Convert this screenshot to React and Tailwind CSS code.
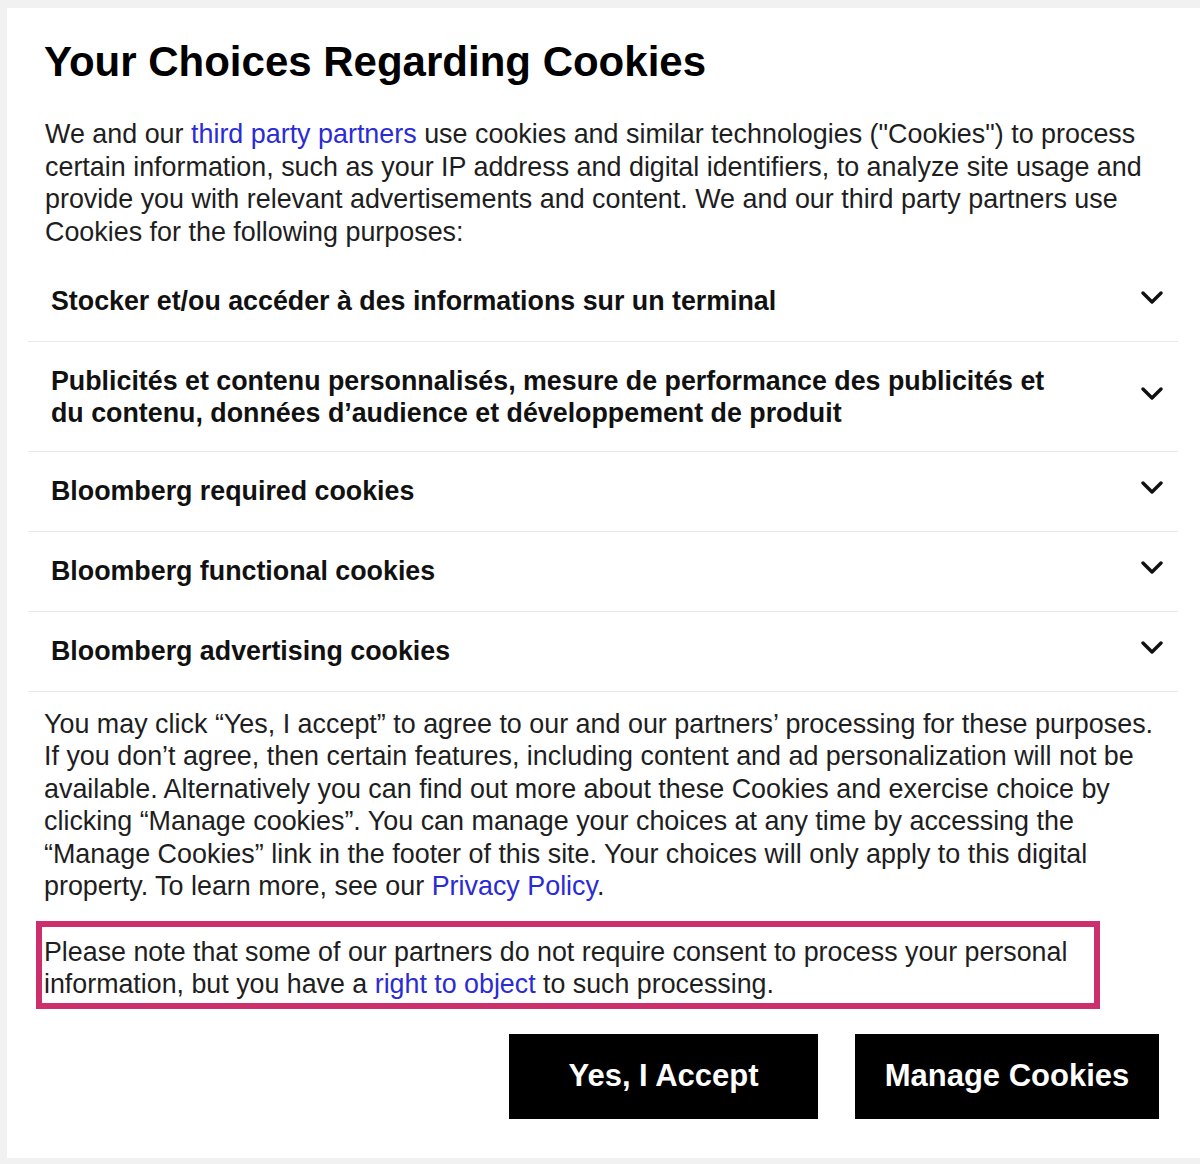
import React from "react";

const PURPOSES = [
  { lines: ["Stocker et/ou accéder à des informations sur un terminal"], pad: "pt-[24px] pb-[23.5px]" },
  {
    lines: [
      "Publicités et contenu personnalisés, mesure de performance des publicités et",
      "du contenu, données d’audience et développement de produit",
    ],
    pad: "pt-[23.5px] pb-[21.5px]",
  },
  { lines: ["Bloomberg required cookies"], pad: "pt-[23.5px] pb-[23.5px]" },
  { lines: ["Bloomberg functional cookies"], pad: "pt-[23.5px] pb-[23.5px]" },
  { lines: ["Bloomberg advertising cookies"], pad: "pt-[23.5px] pb-[23.5px]" },
];

const Chevron = () => (
  <svg width="22" height="14" viewBox="0 0 22 14" fill="none" className="-mt-[6px]">
    <polyline
      points="2,2 11,11 20,2"
      stroke="#111"
      strokeWidth="3.4"
      strokeLinecap="round"
      strokeLinejoin="round"
    />
  </svg>
);

const Link = ({ children }) => <span className="text-[#2b2bd6]">{children}</span>;

const App = () => {
  return (
    <div
      className="w-[1200px] h-[1164px] bg-[#f1f1f1] pt-[8px] pl-[7px]"
      style={{ fontFamily: '"Liberation Sans", Arial, sans-serif' }}
    >
      <div className="w-[1193px] h-[1150px] bg-white pl-[21px] pr-[22px] text-[#1e1e1e]">
        {/* Title */}
        <h1 className="pt-[30px] pl-[16px] text-[42px] leading-[48px] font-bold text-black whitespace-nowrap">
          Your Choices Regarding Cookies
        </h1>

        {/* Intro */}
        <p className="mt-[32px] pl-[17px] text-[26.9px] leading-[32.5px] whitespace-nowrap">
          <span className="block">
            We and our <Link>third party partners</Link> use cookies and similar technologies
            ("Cookies") to process
          </span>
          <span className="block">
            certain information, such as your IP address and digital identifiers, to analyze
            site usage and
          </span>
          <span className="block">
            provide you with relevant advertisements and content. We and our third party
            partners use
          </span>
          <span className="block">Cookies for the following purposes:</span>
        </p>

        {/* Purposes */}
        <div className="mt-[13px]">
          {PURPOSES.map((p, i) => (
            <div
              key={i}
              className={`flex items-center justify-between pl-[23px] pr-[15px] ${p.pad} border-b border-[#e6eaee]`}
            >
              <div className="text-[26.8px] leading-[32px] font-bold text-[#111] whitespace-nowrap">
                {p.lines.map((l) => (
                  <div key={l}>{l}</div>
                ))}
              </div>
              <Chevron />
            </div>
          ))}
        </div>

        {/* Explanation */}
        <p className="mt-[16px] pl-[16px] text-[26.9px] leading-[32.5px] whitespace-nowrap">
          <span className="block">
            You may click “Yes, I accept” to agree to our and our partners’ processing for these
            purposes.
          </span>
          <span className="block">
            If you don’t agree, then certain features, including content and ad personalization
            will not be
          </span>
          <span className="block">
            available. Alternatively you can find out more about these Cookies and exercise
            choice by
          </span>
          <span className="block">
            clicking “Manage cookies”. You can manage your choices at any time by accessing the
          </span>
          <span className="block">
            “Manage Cookies” link in the footer of this site. Your choices will only apply to
            this digital
          </span>
          <span className="block">
            property. To learn more, see our <Link>Privacy Policy</Link>.
          </span>
        </p>

        {/* Highlighted note */}
        <div className="mt-[18px] ml-[8px] w-[1064px] border-[6px] border-[#cc2f6b] pt-[9px] pb-[2px] pl-[2px] text-[26.8px] leading-[32.5px] whitespace-nowrap">
          <span className="block">
            Please note that some of our partners do not require consent to process your
            personal
          </span>
          <span className="block">
            information, but you have a <Link>right to object</Link> to such processing.
          </span>
        </div>

        {/* Actions */}
        <div className="mt-[25px] flex justify-end gap-[37px] pr-[19px]">
          <button className="w-[309px] h-[85px] bg-black text-white text-[31px] font-bold">
            Yes, I Accept
          </button>
          <button className="w-[304px] h-[85px] bg-black text-white text-[31px] font-bold">
            Manage Cookies
          </button>
        </div>
      </div>
    </div>
  );
};

export default App;
